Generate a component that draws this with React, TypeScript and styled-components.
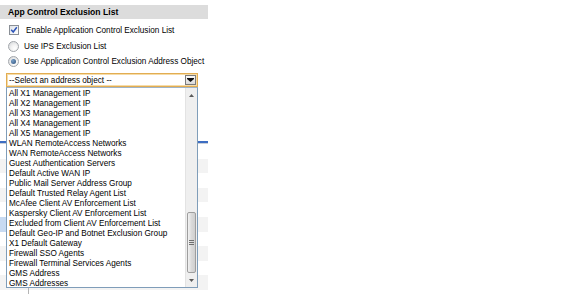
import React, { FC } from 'react';
import styled, { createGlobalStyle } from 'styled-components';

const GlobalStyle = createGlobalStyle`
    html, body {
        margin: 0;
        padding: 0;
        background: #ffffff;
        overflow: hidden;
    }

    body {
        font-family: "Liberation Sans", Arial, sans-serif;
        color: #000;
    }
`;

const ADDRESS_OBJECTS = [
    'All X1 Management IP',
    'All X2 Management IP',
    'All X3 Management IP',
    'All X4 Management IP',
    'All X5 Management IP',
    'WLAN RemoteAccess Networks',
    'WAN RemoteAccess Networks',
    'Guest Authentication Servers',
    'Default Active WAN IP',
    'Public Mail Server Address Group',
    'Default Trusted Relay Agent List',
    'McAfee Client AV Enforcement List',
    'Kaspersky Client AV Enforcement List',
    'Excluded from Client AV Enforcement List',
    'Default Geo-IP and Botnet Exclusion Group',
    'X1 Default Gateway',
    'Firewall SSO Agents',
    'Firewall Terminal Services Agents',
    'GMS Address',
    'GMS Addresses'
];

const Page = styled.div`
    width: 576px;
    height: 303px;
    padding-top: 5px;
    box-sizing: border-box;
`;

const Panel = styled.section`
    width: 208px;
`;

const Header = styled.h3`
    margin: 0;
    height: 14px;
    line-height: 14px;
    padding-left: 8px;
    background: #dcdcdc;
    font-size: 8.6px;
    font-weight: bold;
    color: #000;
`;

const OptionList = styled.div`
    display: flex;
    flex-direction: column;
    padding-top: 3px;
`;

const OptionRow = styled.label<{ $height: number; $indent: number }>`
    display: flex;
    align-items: center;
    gap: ${ p => p.$indent }px;
    height: ${ p => p.$height }px;
    padding-left: 8px;
    font-size: 8.2px;
    color: #000;
`;

const CheckBox = styled.span`
    position: relative;
    display: block;
    width: 8px;
    height: 8px;
    margin-left: 1px;
    border: 1px solid #8a8f96;
    background: linear-gradient(135deg, #dfe3e8, #ffffff);

    svg {
        position: absolute;
        left: 0;
        top: 0;
    }
`;

const Radio = styled.span<{ $checked?: boolean }>`
    position: relative;
    display: block;
    width: 9px;
    height: 9px;
    border-radius: 50%;
    border: 1px solid #a2a6ab;
    background: radial-gradient(circle at 65% 70%, #ffffff 0%, #f3f3f3 40%, #d0d3d6 100%);

    &::after {
        content: "";
        display: ${ p => (p.$checked ? 'block' : 'none') };
        position: absolute;
        left: 2px;
        top: 2px;
        width: 5px;
        height: 5px;
        border-radius: 50%;
        background: radial-gradient(circle at 35% 35%, #7aa0c8, #2b4f7a);
    }
`;

const SelectBox = styled.div`
    position: relative;
    display: flex;
    align-items: center;
    justify-content: space-between;
    margin: 5px 0 0 6px;
    width: 192px;
    height: 14px;
    box-sizing: border-box;
    border: 1px solid #e2ad52;
    box-shadow: inset 0 0 0 1px #f6dca8;
    background: #fff;
    padding-left: 2px;
    font-size: 8.2px;
    color: #000;
    z-index: 2;
`;

const DropButton = styled.span`
    display: flex;
    align-items: center;
    justify-content: center;
    width: 11px;
    height: 10px;
    margin-right: 1px;
    box-sizing: border-box;
    border: 1px solid #7b7b7b;
    background: linear-gradient(#fafafa, #d9d9d9);
`;

const DropList = styled.div`
    position: absolute;
    left: -1px;
    top: 13px;
    width: 192px;
    height: 201px;
    box-sizing: border-box;
    border: 1px solid #7f9db9;
    border-top-color: #9fb4c8;
    background: #fff;
    display: flex;
`;

const Items = styled.ul`
    flex: 1;
    margin: 0;
    padding: 0.5px 0 0 2px;
    list-style: none;
    overflow: hidden;
`;

const Item = styled.li`
    height: 10px;
    line-height: 10px;
    font-size: 8.2px;
    white-space: nowrap;
    color: #000;
`;

const ScrollBar = styled.div`
    width: 12px;
    display: flex;
    flex-direction: column;
    background: #efefef;
    border-left: 1px solid #e3e3e3;
    box-sizing: border-box;
`;

const ScrollArrow = styled.div<{ $height: number }>`
    height: ${ p => p.$height }px;
    display: flex;
    align-items: center;
    justify-content: center;
`;

const Track = styled.div`
    flex: 1;
    display: flex;
    flex-direction: column;
`;

const Thumb = styled.div<{ $offset: number; $size: number }>`
    margin: ${ p => p.$offset }px 1px 0 1px;
    height: ${ p => p.$size }px;
    box-sizing: border-box;
    border: 1px solid #9e9e9e;
    border-radius: 2px;
    background: linear-gradient(90deg, #f2f2f2, #dadada 50%, #cfcfcf);
    display: flex;
    flex-direction: column;
    align-items: center;
    justify-content: center;
    gap: 1px;
`;

const Grip = styled.span`
    display: block;
    width: 5px;
    height: 1px;
    background: #6f6f6f;
`;

const Backdrop = styled.div`
    width: 208px;
    padding-top: 54px;
`;

const Rule = styled.div`
    height: 2px;
    background: #3d6dc2;
    border-bottom: 1px solid #c9cfd8;
`;

const StripeRow = styled.div<{ $shaded: boolean; $mark?: boolean }>`
    height: 14.6px;
    background: ${ p => (p.$shaded ? '#f3f3f3' : '#ffffff') };
    display: flex;

    &::before {
        content: "";
        width: 6px;
        background: ${ p => (p.$mark ? '#c7daf2' : 'transparent') };
    }
`;

const Tick = styled.div`
    margin: -2px 0 0 28px;
    width: 1px;
    height: 6px;
    background: #b5b5b5;
`;

const CheckMark: FC = () => (
    <svg width="8" height="8" viewBox="0 0 8 8">
        <path d="M1.2 3.8 L3.2 6 L6.8 1.2" fill="none" stroke="#2b53b8" strokeWidth="1.5" />
    </svg>
);

const ArrowDown: FC = () => (
    <svg width="7" height="4" viewBox="0 0 7 4">
        <path d="M0 0 H7 V1 L3.5 4 L0 1 Z" fill="#111" />
    </svg>
);

const SmallArrow: FC<{ up?: boolean }> = ({ up }) => (
    <svg width="5" height="3" viewBox="0 0 5 3">
        <path d={ up ? 'M0 3 L2.5 0 L5 3 Z' : 'M0 0 L5 0 L2.5 3 Z' } fill="#5a5a5a" />
    </svg>
);

const App: FC = () => {
    const stripes = Array.from({ length: 10 }, (_, i) => i);

    return (
        <Page>
            <GlobalStyle />
            <Panel>
                <Header>App Control Exclusion List</Header>
                <OptionList>
                    <OptionRow $height={ 16 } $indent={ 7 }>
                        <CheckBox><CheckMark /></CheckBox>
                        Enable Application Control Exclusion List
                    </OptionRow>
                    <OptionRow $height={ 16 } $indent={ 5 }>
                        <Radio />
                        Use IPS Exclusion List
                    </OptionRow>
                    <OptionRow $height={ 14 } $indent={ 5 }>
                        <Radio $checked />
                        Use Application Control Exclusion Address Object
                    </OptionRow>
                </OptionList>
                <SelectBox>
                    <span>--Select an address object --</span>
                    <DropButton><ArrowDown /></DropButton>
                    <DropList>
                        <Items>
                            {ADDRESS_OBJECTS.map(name => (
                                <Item key={ name }>{ name }</Item>
                            ))}
                        </Items>
                        <ScrollBar>
                            <ScrollArrow $height={ 14 }><SmallArrow up /></ScrollArrow>
                            <Track>
                                <Thumb $offset={ 110 } $size={ 61 }>
                                    <Grip /><Grip /><Grip />
                                </Thumb>
                            </Track>
                            <ScrollArrow $height={ 14 }><SmallArrow /></ScrollArrow>
                        </ScrollBar>
                    </DropList>
                </SelectBox>
                <Backdrop>
                    <Rule />
                    {stripes.map(i => (
                        <StripeRow key={ i } $shaded={ i % 2 === 1 } $mark={ i === 5 } />
                    ))}
                    <Tick />
                </Backdrop>
            </Panel>
        </Page>
    );
};

export default App;
